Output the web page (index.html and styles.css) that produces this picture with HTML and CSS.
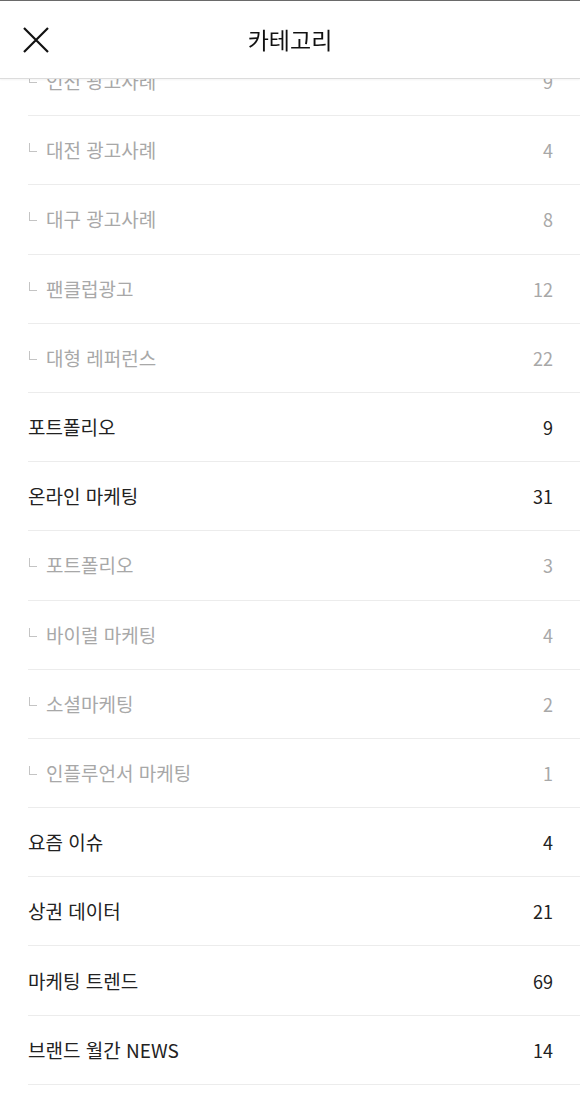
FILE: index.html
```html
<!DOCTYPE html>
<html lang="ko">
<head>
<meta charset="utf-8">
<link rel="stylesheet" href="styles.css">
</head>
<body>
<header class="header">
  <button class="close" aria-label="닫기">
    <svg width="26" height="26" viewBox="0 0 26 26"><path d="M1 1 L25 25 M25 1 L1 25" stroke="#111" stroke-width="2.2" fill="none"/></svg>
  </button>
  <h1 class="title">카테고리</h1>
</header>
<ul class="list">
  <li class="row sub"><span class="name"><span class="mark"></span>인천 광고사례</span><span class="count">9</span></li>
  <li class="row sub"><span class="name"><span class="mark"></span>대전 광고사례</span><span class="count">4</span></li>
  <li class="row sub"><span class="name"><span class="mark"></span>대구 광고사례</span><span class="count">8</span></li>
  <li class="row sub"><span class="name"><span class="mark"></span>팬클럽광고</span><span class="count">12</span></li>
  <li class="row sub"><span class="name"><span class="mark"></span>대형 레퍼런스</span><span class="count">22</span></li>
  <li class="row"><span class="name">포트폴리오</span><span class="count">9</span></li>
  <li class="row"><span class="name">온라인 마케팅</span><span class="count">31</span></li>
  <li class="row sub"><span class="name"><span class="mark"></span>포트폴리오</span><span class="count">3</span></li>
  <li class="row sub"><span class="name"><span class="mark"></span>바이럴 마케팅</span><span class="count">4</span></li>
  <li class="row sub"><span class="name"><span class="mark"></span>소셜마케팅</span><span class="count">2</span></li>
  <li class="row sub"><span class="name"><span class="mark"></span>인플루언서 마케팅</span><span class="count">1</span></li>
  <li class="row"><span class="name">요즘 이슈</span><span class="count">4</span></li>
  <li class="row"><span class="name">상권 데이터</span><span class="count">21</span></li>
  <li class="row"><span class="name">마케팅 트렌드</span><span class="count">69</span></li>
  <li class="row"><span class="name">브랜드 월간 NEWS</span><span class="count">14</span></li>
</ul>
</body>
</html>
```
FILE: styles.css
```css
* { box-sizing: border-box; }
html, body { margin: 0; padding: 0; background: #fff; }
body {
  font-family: "Noto Sans CJK KR", "Noto Sans", sans-serif;
  color: #222;
  border-top: 1px solid #6a6a6a;
}
.header {
  position: fixed;
  top: 1px;
  left: 0;
  right: 0;
  height: 78px;
  background: #fff;
  border-bottom: 1px solid #dcdcdc;
  box-shadow: 0 1px 2px rgba(0,0,0,0.05);
  display: flex;
  align-items: center;
  justify-content: center;
  z-index: 2;
}
.close {
  position: absolute;
  left: 23px;
  top: 26px;
  width: 26px;
  height: 26px;
  padding: 0;
  border: 0;
  background: none;
  display: flex;
}
.title {
  margin: 0 0 2px;
  font-size: 23px;
  font-weight: 400;
  color: #111;
  letter-spacing: 0;
}
.list {
  list-style: none;
  margin: 0;
  padding: 46px 0 0 28px;
}
.row {
  height: 69.2px;
  border-bottom: 1px solid #ececec;
  display: flex;
  align-items: center;
  justify-content: space-between;
  padding-right: 27px;
  font-size: 19px;
  color: #222;
}
.row.sub { color: #a8a8a8; }
.name { display: flex; align-items: center; margin-top: -1px; }
.mark {
  display: inline-block;
  width: 8px;
  height: 9px;
  border-left: 1px solid #c4c4c4;
  border-bottom: 1px solid #c4c4c4;
  margin: 0 9px 4px 1px;
}
.count { font-size: 18px; }
```
